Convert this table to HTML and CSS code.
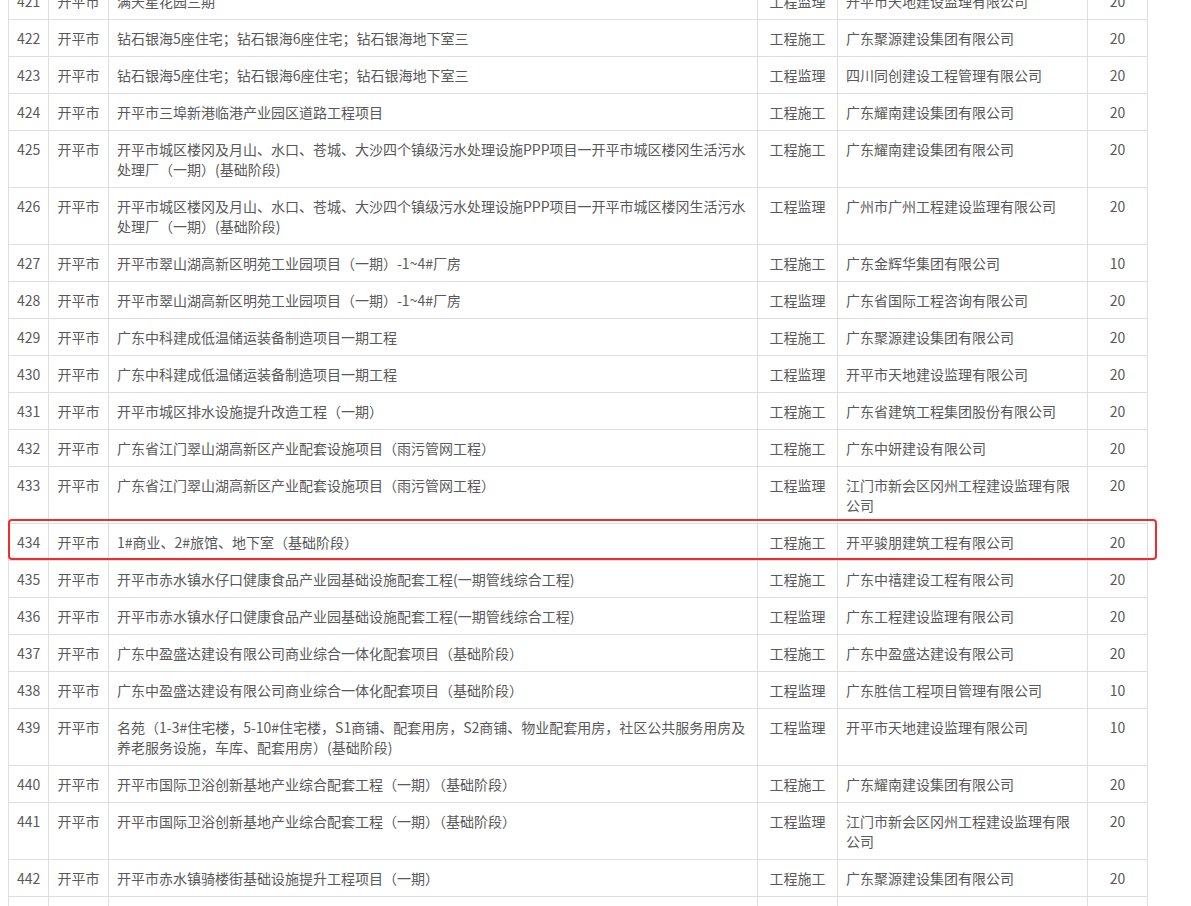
FILE: index.html
```html
<!DOCTYPE html>
<html lang="zh-CN">
<head>
<meta charset="utf-8">
<title>项目列表</title>
<link rel="stylesheet" href="styles.css">
</head>
<body>
<div class="wrap">
<table class="list">
<colgroup>
<col class="c-no"><col class="c-city"><col class="c-name"><col class="c-type"><col class="c-org"><col class="c-score">
</colgroup>
<tbody>
<tr><td class="ctr">421</td><td class="ctr">开平市</td><td>满天星花园三期</td><td class="ctr">工程监理</td><td>开平市天地建设监理有限公司</td><td class="ctr">20</td></tr>
<tr><td class="ctr">422</td><td class="ctr">开平市</td><td>钻石银海5座住宅；钻石银海6座住宅；钻石银海地下室三</td><td class="ctr">工程施工</td><td>广东聚源建设集团有限公司</td><td class="ctr">20</td></tr>
<tr><td class="ctr">423</td><td class="ctr">开平市</td><td>钻石银海5座住宅；钻石银海6座住宅；钻石银海地下室三</td><td class="ctr">工程监理</td><td>四川同创建设工程管理有限公司</td><td class="ctr">20</td></tr>
<tr><td class="ctr">424</td><td class="ctr">开平市</td><td>开平市三埠新港临港产业园区道路工程项目</td><td class="ctr">工程施工</td><td>广东耀南建设集团有限公司</td><td class="ctr">20</td></tr>
<tr><td class="ctr">425</td><td class="ctr">开平市</td><td>开平市城区楼冈及月山、水口、苍城、大沙四个镇级污水处理设施PPP项目一开平市城区楼冈生活污水处理厂（一期）(基础阶段)</td><td class="ctr">工程施工</td><td>广东耀南建设集团有限公司</td><td class="ctr">20</td></tr>
<tr><td class="ctr">426</td><td class="ctr">开平市</td><td>开平市城区楼冈及月山、水口、苍城、大沙四个镇级污水处理设施PPP项目一开平市城区楼冈生活污水处理厂（一期）(基础阶段)</td><td class="ctr">工程监理</td><td>广州市广州工程建设监理有限公司</td><td class="ctr">20</td></tr>
<tr><td class="ctr">427</td><td class="ctr">开平市</td><td>开平市翠山湖高新区明苑工业园项目（一期）-1~4#厂房</td><td class="ctr">工程施工</td><td>广东金辉华集团有限公司</td><td class="ctr">10</td></tr>
<tr><td class="ctr">428</td><td class="ctr">开平市</td><td>开平市翠山湖高新区明苑工业园项目（一期）-1~4#厂房</td><td class="ctr">工程监理</td><td>广东省国际工程咨询有限公司</td><td class="ctr">20</td></tr>
<tr><td class="ctr">429</td><td class="ctr">开平市</td><td>广东中科建成低温储运装备制造项目一期工程</td><td class="ctr">工程施工</td><td>广东聚源建设集团有限公司</td><td class="ctr">20</td></tr>
<tr><td class="ctr">430</td><td class="ctr">开平市</td><td>广东中科建成低温储运装备制造项目一期工程</td><td class="ctr">工程监理</td><td>开平市天地建设监理有限公司</td><td class="ctr">20</td></tr>
<tr><td class="ctr">431</td><td class="ctr">开平市</td><td>开平市城区排水设施提升改造工程（一期）</td><td class="ctr">工程施工</td><td>广东省建筑工程集团股份有限公司</td><td class="ctr">20</td></tr>
<tr><td class="ctr">432</td><td class="ctr">开平市</td><td>广东省江门翠山湖高新区产业配套设施项目（雨污管网工程）</td><td class="ctr">工程施工</td><td>广东中妍建设有限公司</td><td class="ctr">20</td></tr>
<tr><td class="ctr">433</td><td class="ctr">开平市</td><td>广东省江门翠山湖高新区产业配套设施项目（雨污管网工程）</td><td class="ctr">工程监理</td><td>江门市新会区冈州工程建设监理有限公司</td><td class="ctr">20</td></tr>
<tr><td class="ctr">434</td><td class="ctr">开平市</td><td>1#商业、2#旅馆、地下室（基础阶段）</td><td class="ctr">工程施工</td><td>开平骏朋建筑工程有限公司</td><td class="ctr">20</td></tr>
<tr><td class="ctr">435</td><td class="ctr">开平市</td><td>开平市赤水镇水仔口健康食品产业园基础设施配套工程(一期管线综合工程)</td><td class="ctr">工程施工</td><td>广东中禧建设工程有限公司</td><td class="ctr">20</td></tr>
<tr><td class="ctr">436</td><td class="ctr">开平市</td><td>开平市赤水镇水仔口健康食品产业园基础设施配套工程(一期管线综合工程)</td><td class="ctr">工程监理</td><td>广东工程建设监理有限公司</td><td class="ctr">20</td></tr>
<tr><td class="ctr">437</td><td class="ctr">开平市</td><td>广东中盈盛达建设有限公司商业综合一体化配套项目（基础阶段）</td><td class="ctr">工程施工</td><td>广东中盈盛达建设有限公司</td><td class="ctr">20</td></tr>
<tr><td class="ctr">438</td><td class="ctr">开平市</td><td>广东中盈盛达建设有限公司商业综合一体化配套项目（基础阶段）</td><td class="ctr">工程监理</td><td>广东胜信工程项目管理有限公司</td><td class="ctr">10</td></tr>
<tr><td class="ctr">439</td><td class="ctr">开平市</td><td>名苑（1-3#住宅楼，5-10#住宅楼，S1商铺、配套用房，S2商铺、物业配套用房，社区公共服务用房及养老服务设施，车库、配套用房）(基础阶段)</td><td class="ctr">工程监理</td><td>开平市天地建设监理有限公司</td><td class="ctr">10</td></tr>
<tr><td class="ctr">440</td><td class="ctr">开平市</td><td>开平市国际卫浴创新基地产业综合配套工程（一期）（基础阶段）</td><td class="ctr">工程施工</td><td>广东耀南建设集团有限公司</td><td class="ctr">20</td></tr>
<tr><td class="ctr">441</td><td class="ctr">开平市</td><td>开平市国际卫浴创新基地产业综合配套工程（一期）（基础阶段）</td><td class="ctr">工程监理</td><td>江门市新会区冈州工程建设监理有限公司</td><td class="ctr">20</td></tr>
<tr><td class="ctr">442</td><td class="ctr">开平市</td><td>开平市赤水镇骑楼街基础设施提升工程项目（一期）</td><td class="ctr">工程施工</td><td>广东聚源建设集团有限公司</td><td class="ctr">20</td></tr>
<tr><td class="ctr">443</td><td class="ctr">开平市</td><td>开平市赤水镇骑楼街基础设施提升工程项目（一期）</td><td class="ctr">工程监理</td><td>开平市天地建设监理有限公司</td><td class="ctr">20</td></tr>
</tbody>
</table>
<div class="mark"></div>
</div>
</body>
</html>
```
FILE: styles.css
```css
html, body {
  margin: 0;
  padding: 0;
  background: #ffffff;
  overflow: hidden;
}
body {
  font-family: "Noto Sans CJK SC", "Noto Sans", sans-serif;
  font-size: 14px;
  color: #595959;
}
.wrap {
  position: relative;
  margin: -18px 0 0 8px;
  width: 1139px;
}
.list {
  border-collapse: collapse;
  table-layout: fixed;
  width: 1139px;
}
.c-no { width: 40px; }
.c-city { width: 60px; }
.c-name { width: 649px; }
.c-type { width: 80px; }
.c-org { width: 250px; }
.c-score { width: 60px; }
.list td {
  border: 1px solid #dedede;
  padding: 8px 8px;
  line-height: 20px;
  vertical-align: top;
  text-align: left;
  word-break: break-all;
}
.list td.ctr {
  text-align: center;
  white-space: nowrap;
}
.mark {
  position: absolute;
  left: 0;
  top: 537px;
  width: 1149px;
  height: 41px;
  box-sizing: border-box;
  border: 2px solid #f22b2b;
  border-radius: 4px;
  pointer-events: none;
}
```
